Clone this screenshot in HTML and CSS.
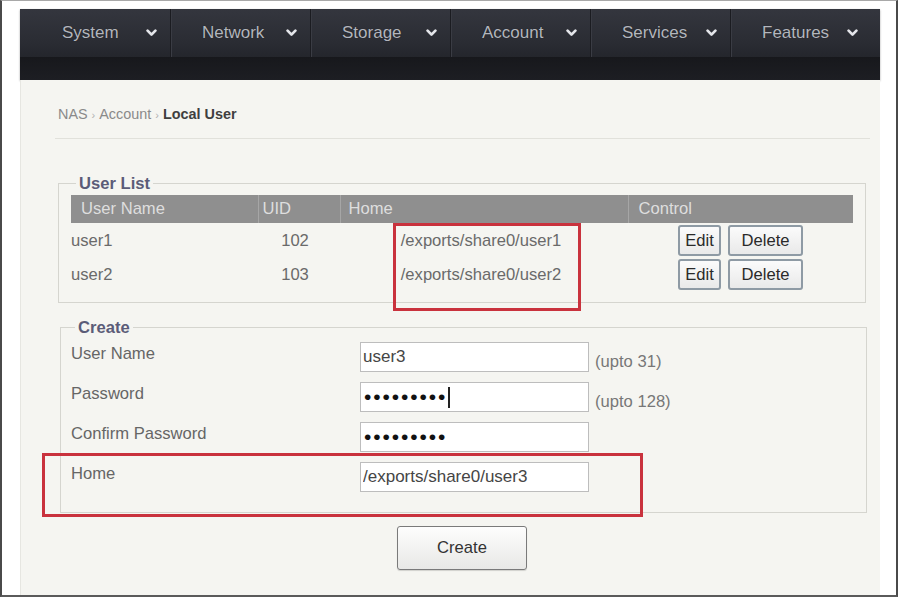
FILE: index.html
```html
<!DOCTYPE html>
<html lang="en">
<head>
<meta charset="utf-8">
<title>NAS - Local User</title>
<link rel="stylesheet" href="styles.css">
</head>
<body>
<div class="frame">
  <nav class="nav">
    <div class="nav-items">
      <div class="nav-item"><span>System</span><svg class="chev" viewBox="0 0 11 8"><polyline points="1.6,1.6 5.5,5.6 9.4,1.6"/></svg></div>
      <div class="nav-item"><span>Network</span><svg class="chev" viewBox="0 0 11 8"><polyline points="1.6,1.6 5.5,5.6 9.4,1.6"/></svg></div>
      <div class="nav-item"><span>Storage</span><svg class="chev" viewBox="0 0 11 8"><polyline points="1.6,1.6 5.5,5.6 9.4,1.6"/></svg></div>
      <div class="nav-item"><span>Account</span><svg class="chev" viewBox="0 0 11 8"><polyline points="1.6,1.6 5.5,5.6 9.4,1.6"/></svg></div>
      <div class="nav-item"><span>Services</span><svg class="chev" viewBox="0 0 11 8"><polyline points="1.6,1.6 5.5,5.6 9.4,1.6"/></svg></div>
      <div class="nav-item last"><span>Features</span><svg class="chev" viewBox="0 0 11 8"><polyline points="1.6,1.6 5.5,5.6 9.4,1.6"/></svg></div>
    </div>
    <div class="nav-sub"></div>
  </nav>

  <main class="panel">
    <div class="crumbs">
      <span class="crumb">NAS</span><span class="sep">›</span><span class="crumb">Account</span><span class="sep">›</span><span class="current">Local User</span>
    </div>
    <hr class="rule">

    <fieldset class="group list">
      <legend>User List</legend>
      <table class="users">
        <colgroup>
          <col class="c-name"><col class="c-uid"><col class="c-home"><col class="c-ctl">
        </colgroup>
        <thead>
          <tr><th>User Name</th><th>UID</th><th>Home</th><th>Control</th></tr>
        </thead>
        <tbody>
          <tr>
            <td class="name">user1</td>
            <td class="num">102</td>
            <td class="path">/exports/share0/user1</td>
            <td class="ctl"><button class="btn edit">Edit</button><button class="btn del">Delete</button></td>
          </tr>
          <tr>
            <td class="name">user2</td>
            <td class="num">103</td>
            <td class="path">/exports/share0/user2</td>
            <td class="ctl"><button class="btn edit">Edit</button><button class="btn del">Delete</button></td>
          </tr>
        </tbody>
      </table>
    </fieldset>

    <fieldset class="group create">
      <legend>Create</legend>
      <div class="form-row">
        <label class="lbl" for="f-user">User Name</label>
        <input class="field" id="f-user" type="text" value="user3">
        <span class="hint">(upto 31)</span>
      </div>
      <div class="form-row">
        <label class="lbl" for="f-pass">Password</label>
        <span class="field-wrap"><input class="field pw" id="f-pass" type="password" value="passwordx"><span class="caret"></span></span>
        <span class="hint">(upto 128)</span>
      </div>
      <div class="form-row">
        <label class="lbl" for="f-conf">Confirm Password</label>
        <input class="field pw" id="f-conf" type="password" value="passwordx">
      </div>
      <div class="form-row">
        <label class="lbl" for="f-home">Home</label>
        <input class="field" id="f-home" type="text" value="/exports/share0/user3">
      </div>
    </fieldset>

    <div class="actions"><button class="btn-create">Create</button></div>

    <div class="mark mark-homes"></div>
    <div class="mark mark-home"></div>
  </main>
</div>
</body>
</html>
```

FILE: styles.css
```css
* { box-sizing: border-box; }

html, body {
  margin: 0;
  padding: 0;
  background: #ffffff;
}

body {
  font-family: "Liberation Sans", Arial, sans-serif;
  font-size: 16.6px;
  color: #555;
}

.frame {
  width: 898px;
  height: 597px;
  border-top: 1px solid #a8a8a8;
  border-left: 2px solid #4a4a4a;
  border-right: 2px solid #4a4a4a;
  border-bottom: 2px solid #5a5a5a;
  padding: 8px 0 0 18px;
  display: flex;
  flex-direction: column;
  overflow: hidden;
}

/* ---------- top navigation ---------- */
.nav {
  width: 860px;
  flex: none;
  box-shadow: 0 1px 2px rgba(0,0,0,0.35);
}

.nav-items {
  height: 48px;
  display: flex;
  padding-left: 11px;
  background: linear-gradient(#34363e, #2a2c33 70%, #24262c);
}

.nav-item {
  width: 140px;
  display: flex;
  align-items: center;
  padding: 0 13px 0 31px;
  border-right: 1px solid #1b1c21;
  box-shadow: 1px 0 0 #3a3c44;
  color: #b3b6bd;
  font-size: 17px;
  text-shadow: 0 0 1px rgba(0,0,0,0.5);
}

.nav-item.last {
  border-right: none;
  box-shadow: none;
}

.chev {
  width: 11px;
  height: 8px;
  margin-left: auto;
  fill: none;
  stroke: #e4e5ea;
  stroke-width: 2.7;
  stroke-linecap: round;
  stroke-linejoin: round;
}

.nav-sub {
  height: 23px;
  background: linear-gradient(#17181c, #1d1e23);
}

/* ---------- content panel ---------- */
.panel {
  position: relative;
  width: 860px;
  flex: 1;
  background: #f5f5f1;
  padding: 26px 14px 0 38px;
  box-shadow: inset 1px 0 0 #e6e6e1;
}

.crumbs {
  font-size: 14.4px;
  line-height: 17px;
  color: #8a8a8a;
}

.crumbs .sep {
  color: #b0b0b0;
  font-size: 11px;
  margin: 0 4px;
}

.crumbs .current {
  color: #3f3f3f;
  font-weight: bold;
}

.rule {
  border: none;
  border-top: 1px solid #e1e1db;
  margin: 14px -4px 0 -3px;
  height: 0;
}

/* ---------- fieldsets ---------- */
.group {
  border: 1px solid #d5d5cf;
  margin: 0;
  min-width: 0;
}

.group legend {
  font-size: 16.6px;
  font-weight: bold;
  line-height: 17px;
  color: #5b5c78;
  padding: 0 3px;
}

.list {
  margin-top: 36px;
  padding: 0 12px 11px 12px;
}

.list legend { margin-left: 5px; }

.users {
  width: 782px;
  margin-top: 3px;
  border-collapse: collapse;
  table-layout: fixed;
}

.c-name { width: 187px; }
.c-uid  { width: 82px; }
.c-home { width: 288px; }
.c-ctl  { width: 225px; }

.users th {
  height: 28px;
  background: #8f8f8f;
  color: #dedede;
  font-weight: normal;
  text-align: left;
  padding: 0 0 0 10px;
}

.users th + th { border-left: 1px solid #a6a6a6; }
.users th:nth-child(2) { padding-left: 4px; }
.users th:nth-child(3) { padding-left: 8px; }

.users td {
  height: 34px;
  padding: 2px 0 1px 0;
  color: #6a6a6a;
  vertical-align: middle;
}

.users td.num,
.users td.path,
.users td.ctl { text-align: center; }

.users td.num { padding-right: 8px; }
.users td.path { padding-right: 6px; }

.btn {
  height: 31px;
  font-family: inherit;
  font-size: 16.6px;
  color: #2a2a2a;
  border: 2px solid #8e9aa4;
  border-radius: 3px;
  background: linear-gradient(#fbfbfb, #e9e9e9);
  padding: 0;
  vertical-align: middle;
}

.btn.edit { width: 43px; }
.btn.del { width: 75px; margin-left: 7px; }

.create {
  margin: 16px -1px 0 2px;
  padding: 0 10px 20px 10px;
}

.create legend { margin-left: 4px; }

.form-row {
  display: flex;
  align-items: flex-start;
  margin-top: 10px;
}

.form-row:first-of-type { margin-top: 6px; }

.lbl {
  width: 289px;
  flex: none;
  line-height: 20px;
  padding-top: 2px;
  color: #666;
}

.field-wrap {
  position: relative;
  display: block;
}

.field {
  display: block;
  width: 229px;
  height: 30px;
  border: 1px solid #bdbdbd;
  background: #ffffff;
  padding: 0 2px;
  font-family: inherit;
  font-size: 17px;
  color: #454545;
  outline: none;
}

.field.pw {
  font-size: 21px;
  letter-spacing: 1.9px;
  color: #111;
  padding-left: 3px;
}

.caret {
  position: absolute;
  left: 88px;
  top: 5px;
  width: 1.5px;
  height: 21px;
  background: #222;
}

.hint {
  margin: 10px 0 0 6px;
  line-height: 20px;
  color: #777;
}

/* ---------- create button ---------- */
.actions {
  display: flex;
  justify-content: center;
  margin-top: 13px;
}

.btn-create {
  width: 130px;
  height: 44px;
  font-family: inherit;
  font-size: 16.6px;
  color: #333;
  border: 1px solid #7a7a7a;
  border-radius: 3px;
  background: linear-gradient(#fdfdfd, #e8e8e6);
  box-shadow: 0 1px 1px rgba(0,0,0,0.15);
}

/* ---------- red annotation boxes ---------- */
.mark {
  position: absolute;
  border: 3px solid #c9323d;
  pointer-events: none;
}

.mark-homes {
  left: 373px;
  top: 143px;
  width: 188px;
  height: 88px;
}

.mark-home {
  left: 22px;
  top: 373px;
  width: 601px;
  height: 64px;
}
```
